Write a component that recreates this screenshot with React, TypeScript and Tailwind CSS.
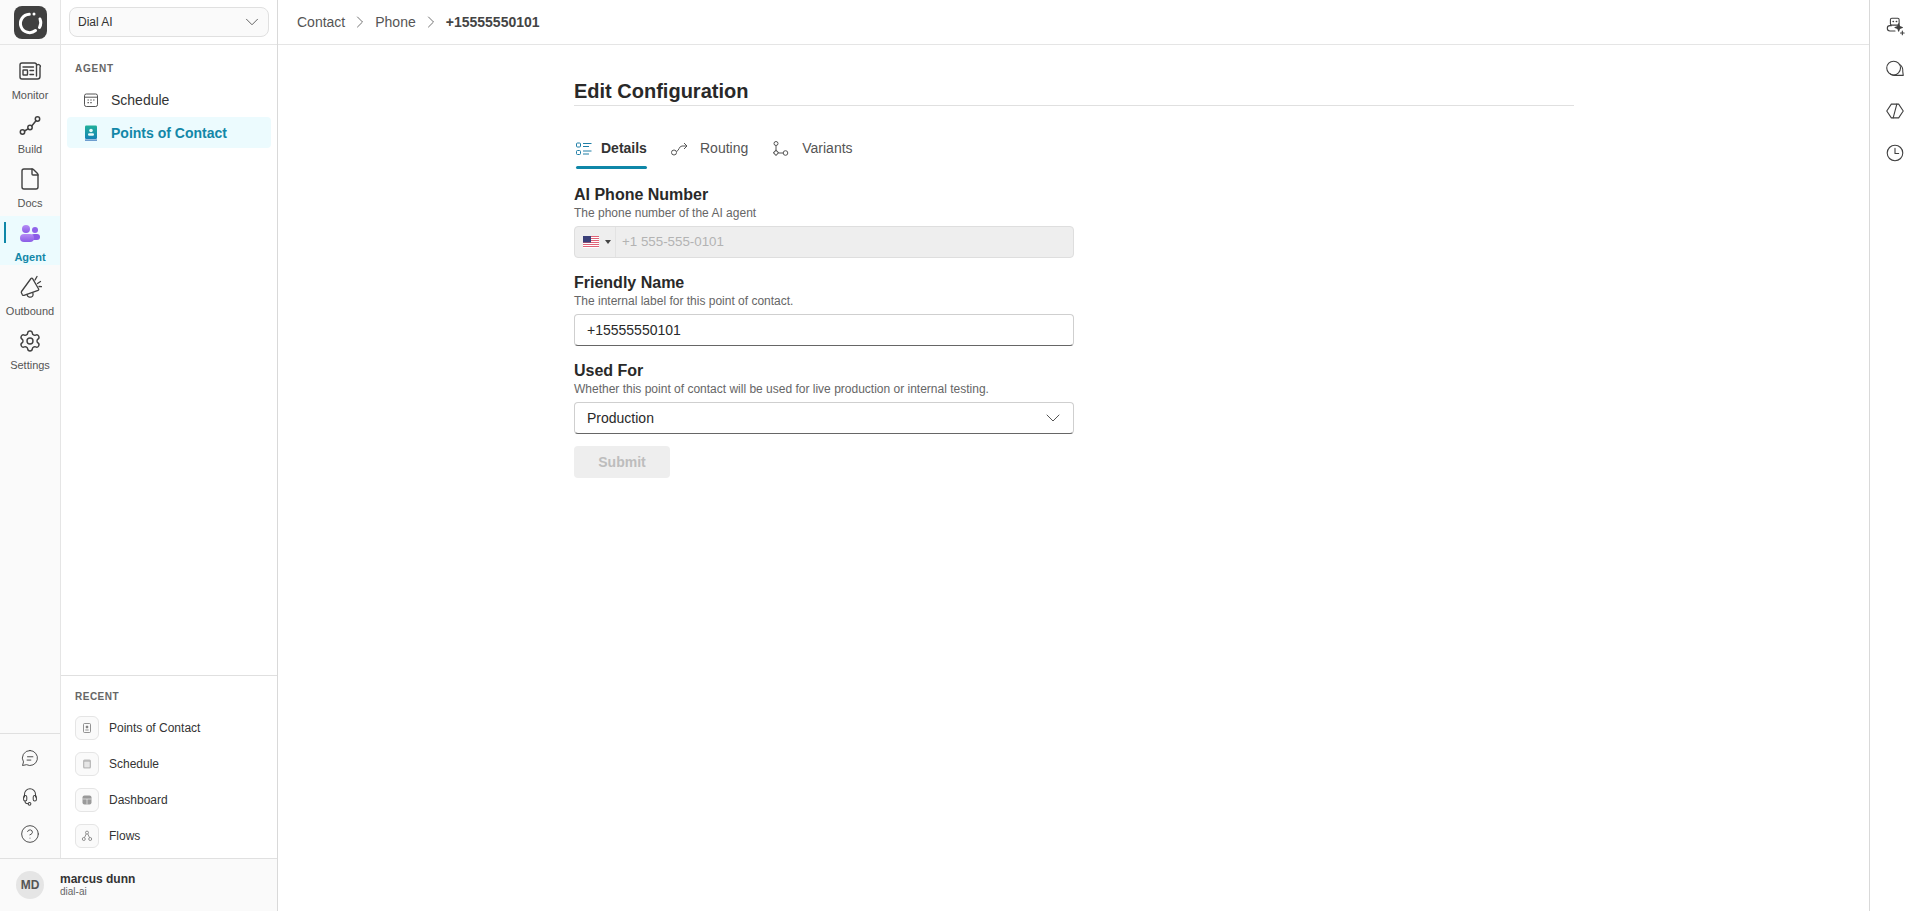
import React from "react";
import { ChevronDown, ChevronRight, File, Settings, HelpCircle } from "lucide-react";

const S = (p: React.SVGProps<SVGSVGElement> & { size?: number }) => {
  const { size = 24, children, ...r } = p;
  return (
    <svg width={size} height={size} viewBox="0 0 24 24" fill="none" stroke="#404040" strokeWidth={1.5} strokeLinecap="round" strokeLinejoin="round" {...r}>
      {children}
    </svg>
  );
};

const MonitorIcon = () => (
  <S strokeWidth={1.4}>
    <path d="M18.5 6.5V6a2 2 0 0 0-2-2H4a2 2 0 0 0-2 2v12a2 2 0 0 0 2 2h15.5a2.5 2.5 0 0 0 2.5-2.5V8.5a2 2 0 0 0-3.5-2zM18.5 6.5V17" />
    <rect x="5" y="11" width="4.5" height="5" rx="0.5" />
    <path d="M5 8h10.5M12 11.5h3.5M12 15.5h3.5" />
  </S>
);

const BuildIcon = () => (
  <S>
    <circle cx="4.5" cy="19" r="2.2" />
    <circle cx="12" cy="14.5" r="2.2" />
    <circle cx="19.5" cy="6" r="2.2" />
    <path d="M6.5 18 10 15.8M13.7 13 18 7.7" />
  </S>
);

const AgentIcon = () => (
  <svg width="24" height="24" viewBox="0 0 24 24">
    <defs>
      <linearGradient id="ag" x1="0" y1="0" x2="0" y2="1">
        <stop offset="0" stopColor="#b58cf5" />
        <stop offset="1" stopColor="#8a5ce6" />
      </linearGradient>
    </defs>
    <circle cx="8" cy="8" r="4" fill="url(#ag)" />
    <circle cx="17" cy="9" r="3" fill="#8f63ea" />
    <rect x="13" y="13" width="9" height="6" rx="3" fill="#8a5ce6" />
    <rect x="2" y="13" width="14" height="8" rx="4" fill="url(#ag)" />
  </svg>
);

const OutboundIcon = () => (
  <S strokeWidth={1.3}>
    <path d="M3.5 16.5 13 3.5c.5-.6 1.2-.5 1.6.1l6 10.4c.3.6.1 1.2-.5 1.4L6 20.3c-.6.2-1.2 0-1.6-.5l-.9-1.8c-.3-.5-.3-1 0-1.5z" />
    <path d="M9 19.5c.2 2.6 3.8 3.6 5.6 1.6.6-.7.6-2 .2-3.5" />
    <path d="M17 5l2-3.5M19.5 8.5l3-2M21 11.5l2.5.2" />
  </S>
);

const RailItem = ({ label, icon, active }: { label: string; icon: React.ReactNode; active?: boolean }) => (
  <div className={`relative flex h-[49px] flex-col items-center pt-[5px] ${active ? "bg-[#ecfbfe]" : ""}`}>
    {active && <div className="absolute left-1 top-[6px] h-[21px] w-0.5 bg-[#0e87a8]" />}
    <div className="flex h-6 w-6 items-center justify-center">{icon}</div>
    <div className={`mt-1 text-[11px] leading-4 ${active ? "font-bold text-[#1387a8]" : "text-[#555]"}`}>{label}</div>
  </div>
);

const BottomRailIcon = ({ children }: { children: React.ReactNode }) => (
  <div className="flex h-[38px] items-center justify-center">{children}</div>
);

const RecentRow = ({ label, icon }: { label: string; icon: React.ReactNode }) => (
  <div className="flex h-9 items-center gap-[10px]">
    <div className="flex h-6 w-6 items-center justify-center rounded-md border border-[#e5e5e5] bg-[#fafafa]">{icon}</div>
    <span className="text-xs text-[#333]">{label}</span>
  </div>
);

const Field = ({ title, desc, children }: { title: string; desc: string; children: React.ReactNode }) => (
  <div className="mb-[15px] w-[500px]">
    <div className="text-base font-bold leading-5 text-[#292929]">{title}</div>
    <div className="mb-[5px] text-xs leading-4 text-[#666]">{desc}</div>
    {children}
  </div>
);

const UsFlag = () => (
  <svg width="16" height="12" viewBox="0 0 16 12">
    <rect width="16" height="12" fill="#fff" />
    {[0, 2, 4, 6, 8, 10].map((y) => (
      <rect key={y} y={y} width="16" height="1" fill="#d9485f" opacity="0.85" />
    ))}
    <rect width="8" height="6.5" fill="#3a3f78" />
  </svg>
);

export default function App() {
  return (
    <div className="flex h-[911px] w-full overflow-hidden bg-white font-['Liberation_Sans',Arial,sans-serif] text-[#333]">
      <div className="flex w-[278px] shrink-0 flex-col border-r border-[#d9d9d9]">
        <div className="flex min-h-0 flex-1">
          {/* icon rail */}
          <div className="flex w-[61px] shrink-0 flex-col border-r border-[#e5e5e5] bg-[#fafafa]">
            <div className="flex h-[45px] shrink-0 items-center justify-center border-b border-[#e5e5e5]">
              <div className="flex h-[33px] w-[33px] items-center justify-center rounded-lg bg-[#404040]">
                <svg width="33" height="33" viewBox="0 0 33 33" fill="none" stroke="#fff" strokeWidth="3" strokeLinecap="round">
                  <path d="M15.3 8.2A9.2 9.2 0 1 0 21.5 24.5" />
                  <path d="M26 13a9.5 9.5 0 0 1-.5 8.5" />
                  <circle cx="20" cy="8" r="1.5" fill="#fff" stroke="none" />
                </svg>
              </div>
            </div>
            <div className="flex flex-col gap-[5px] pt-[9px]">
              <RailItem label="Monitor" icon={<MonitorIcon />} />
              <RailItem label="Build" icon={<BuildIcon />} />
              <RailItem label="Docs" icon={<File size={24} strokeWidth={1.4} color="#404040" />} />
              <RailItem label="Agent" active icon={<AgentIcon />} />
              <RailItem label="Outbound" icon={<OutboundIcon />} />
              <RailItem label="Settings" icon={<Settings size={24} strokeWidth={1.4} color="#404040" />} />
            </div>
            <div className="mt-auto flex flex-col border-t border-[#e0e0e0] pb-[5px] pt-[5px]">
              <BottomRailIcon>
                <S size={20} strokeWidth={1.1}>
                  <path d="M12 3a9 9 0 1 1-4.2 17L3 21l1.2-4.3A9 9 0 0 1 12 3z" />
                  <path d="M9 10.5h6.5M8.5 14.5H13" />
                </S>
              </BottomRailIcon>
              <BottomRailIcon>
                <S size={22} strokeWidth={1.1}>
                  <path d="M6 13V10a6 6 0 0 1 12 0v3" />
                  <rect x="5" y="11.5" width="3.5" height="6" rx="1.7" />
                  <rect x="15.5" y="11.5" width="3.5" height="6" rx="1.7" />
                  <path d="M6.5 17.5c0 2 1.5 3 3.5 3" />
                  <circle cx="11.5" cy="20.5" r="1.5" />
                </S>
              </BottomRailIcon>
              <BottomRailIcon>
                <HelpCircle size={20} strokeWidth={1.1} color="#404040" />
              </BottomRailIcon>
            </div>
          </div>

          {/* sidebar */}
          <div className="flex min-w-0 flex-1 flex-col">
            <div className="flex h-[45px] shrink-0 items-center border-b border-[#e5e5e5] px-2">
              <div className="flex h-[30px] w-[200px] items-center justify-between rounded-lg border border-[#e0e0e0] bg-[#fafafa] pl-2 pr-[5px]">
                <span className="text-xs text-[#333]">Dial AI</span>
                <ChevronDown size={22} strokeWidth={1} color="#555" />
              </div>
            </div>
            <div className="flex-1 px-[6px]">
              <div className="flex h-[38px] items-center px-2 pt-2 text-[10px] font-bold tracking-[0.8px] text-[#666]">AGENT</div>
              <div className="flex h-[34px] items-center gap-3 pl-4">
                <svg width="16" height="16" viewBox="0 0 16 16" fill="none" stroke="#555" strokeWidth="1">
                  <rect x="1.5" y="2" width="13" height="12.5" rx="1.8" />
                  <path d="M1.5 5.2h13" />
                  <path d="M4.5 8h1.4M7.3 8h1.4M10.1 8h1.4M4.5 10.6h1.4M7.3 10.6h1.4" strokeWidth="1.2" />
                </svg>
                <span className="text-sm text-[#333]">Schedule</span>
              </div>
              <div className="flex h-[31px] items-center gap-3 rounded-sm bg-[#ecfbfe] pl-4">
                <svg width="16" height="16" viewBox="0 0 16 16">
                  <defs>
                    <linearGradient id="pc" x1="0" y1="0" x2="0" y2="1">
                      <stop offset="0" stopColor="#22b09a" />
                      <stop offset="1" stopColor="#1582b5" />
                    </linearGradient>
                  </defs>
                  <rect x="2" y="0.5" width="12" height="13.5" rx="1.2" fill="url(#pc)" />
                  <rect x="2" y="14.6" width="12" height="1" fill="#1a5fb0" />
                  <circle cx="8" cy="5.5" r="1.8" fill="#e8fbf9" />
                  <rect x="5" y="8.3" width="6" height="2.4" rx="1.2" fill="#e8fbf9" />
                </svg>
                <span className="text-sm font-bold text-[#1387a8]">Points of Contact</span>
              </div>
            </div>
            <div className="border-t border-[#e0e0e0] px-[14px] pb-1">
              <div className="flex h-[34px] items-center pt-[6px] text-[10px] font-bold tracking-[0.5px] text-[#666]">RECENT</div>
              <RecentRow
                label="Points of Contact"
                icon={
                  <svg width="12" height="12" viewBox="0 0 12 12" fill="none" stroke="#777" strokeWidth="0.8">
                    <rect x="2.5" y="1.5" width="7" height="9" rx="1" />
                    <circle cx="6" cy="5" r="1" fill="#777" />
                    <path d="M4.3 8h3.4" />
                  </svg>
                }
              />
              <RecentRow
                label="Schedule"
                icon={
                  <svg width="12" height="12" viewBox="0 0 12 12">
                    <rect x="2" y="1.5" width="8" height="9" rx="1.5" fill="#bbb" />
                    <rect x="3.3" y="3.8" width="5.4" height="5.4" rx="0.6" fill="#e6e6e6" />
                  </svg>
                }
              />
              <RecentRow
                label="Dashboard"
                icon={
                  <svg width="12" height="12" viewBox="0 0 12 12">
                    <rect x="1.5" y="1.5" width="9" height="9" rx="2" fill="#9a9a9a" />
                    <path d="M1.5 5h9M6 5v5.5" stroke="#eee" strokeWidth="0.7" />
                  </svg>
                }
              />
              <RecentRow
                label="Flows"
                icon={
                  <svg width="12" height="12" viewBox="0 0 12 12" fill="none" stroke="#777" strokeWidth="0.8">
                    <circle cx="6" cy="2.6" r="1.5" />
                    <circle cx="2.8" cy="9" r="1.5" />
                    <circle cx="9.2" cy="9" r="1.5" />
                    <path d="M5.2 4 3.5 7.6M6.8 4l1.7 3.6" />
                  </svg>
                }
              />
            </div>
          </div>
        </div>
        {/* user */}
        <div className="flex h-[53px] shrink-0 items-center border-t border-[#e0e0e0] bg-[#fafafa] pl-4">
          <div className="flex h-7 w-7 items-center justify-center rounded-full bg-[#e5e5e5] text-xs font-bold text-[#555]">MD</div>
          <div className="ml-4 flex flex-col">
            <span className="text-xs font-bold leading-[14px] text-[#333]">marcus dunn</span>
            <span className="text-[10px] leading-3 text-[#666]">dial-ai</span>
          </div>
        </div>
      </div>

      {/* main */}
      <div className="flex min-w-0 flex-1 flex-col">
        <div className="flex h-[45px] shrink-0 items-center gap-[5px] border-b border-[#e5e5e5] pl-[19px] text-sm">
          <span className="text-[#555]">Contact</span>
          <ChevronRight size={20} strokeWidth={1} color="#555" />
          <span className="text-[#555]">Phone</span>
          <ChevronRight size={20} strokeWidth={1} color="#555" />
          <span className="font-bold text-[#444]">+15555550101</span>
        </div>
        <div className="flex-1 pl-[296px] pt-[30px]">
          <div className="w-[1000px]">
            <div className="h-[31px] border-b border-[#e0e0e0] text-xl font-bold leading-[32px] text-[#292929]">Edit Configuration</div>
            <div className="mt-5 flex h-[43px] items-start gap-[24px] pl-[2px]">
              <div className="relative flex h-[43px] w-[71px] items-start gap-[9px] pt-[13px]">
                <svg width="16" height="16" viewBox="0 0 16 16" fill="none" stroke="#1e7ea6" strokeWidth="1" className="mt-[2px]">
                  <rect x="0.5" y="2" width="4" height="4" rx="1" />
                  <rect x="0.5" y="9.5" width="4" height="4" rx="1" />
                  <path d="M7 2.5h8.5M7 5.5h6M7 10h8.5M7 13h6" />
                </svg>
                <span className="text-sm font-bold leading-[18px] text-[#333]">Details</span>
                <div className="absolute inset-x-0 bottom-0 h-[3px] rounded-sm bg-[#0e87a8]" />
              </div>
              <div className="flex items-start gap-[12px] pt-[13px]">
                <svg width="17" height="16" viewBox="0 0 17 16" fill="none" stroke="#555" strokeWidth="1" className="mt-[2px]">
                  <circle cx="3" cy="11.5" r="2.5" />
                  <path d="M5.5 10.5C8 10 8 5 11 5h4.5M13 2l3 3-3 3" />
                </svg>
                <span className="text-sm leading-[18px] text-[#555]">Routing</span>
              </div>
              <div className="flex items-start gap-[13px] pl-[1px] pt-[13px]">
                <svg width="16" height="16" viewBox="0 0 16 16" fill="none" stroke="#555" strokeWidth="1" className="mt-[2px]">
                  <circle cx="3" cy="2.5" r="2" />
                  <rect x="1.2" y="10" width="3.6" height="3.6" transform="rotate(45 3 11.8)" />
                  <circle cx="12.5" cy="12" r="2.3" />
                  <path d="M3 4.5v5M5.6 12h4.6" />
                </svg>
                <span className="text-sm leading-[18px] text-[#555]">Variants</span>
              </div>
            </div>
            <div className="mt-4">
              <Field title="AI Phone Number" desc="The phone number of the AI agent">
                <div className="flex h-8 items-center rounded border border-[#dedede] bg-[#eeeeee]">
                  <div className="flex h-full w-[41px] shrink-0 items-center gap-[6px] border-r border-[#e3e3e3] pl-2">
                    <UsFlag />
                    <div className="h-0 w-0 border-x-[3px] border-t-4 border-x-transparent border-t-[#444]" />
                  </div>
                  <span className="pl-[6px] text-[13.33px] text-[#b3b3b3]">+1 555-555-0101</span>
                </div>
              </Field>
              <Field title="Friendly Name" desc="The internal label for this point of contact.">
                <div className="flex h-8 items-center rounded border border-[#cfcfcf] border-b-[#666] bg-white pl-3 text-sm text-[#292929]">+15555550101</div>
              </Field>
              <Field title="Used For" desc="Whether this point of contact will be used for live production or internal testing.">
                <div className="flex h-8 items-center justify-between rounded border border-[#cfcfcf] border-b-[#666] bg-white pl-3 pr-2 text-sm text-[#292929]">
                  Production
                  <ChevronDown size={24} strokeWidth={1} color="#555" />
                </div>
              </Field>
              <div className="-mt-[3px] flex h-8 w-[96px] items-center justify-center rounded bg-[#eeeeee] text-sm font-bold text-[#bdbdbd]">Submit</div>
            </div>
          </div>
        </div>
      </div>

      {/* right rail */}
      <div className="flex w-[51px] shrink-0 flex-col items-center gap-5 border-l border-[#d9d9d9] pt-4">
        <S size={22} strokeWidth={1.2}>
          <rect x="7" y="2.5" width="9.5" height="7.5" rx="1.5" />
          <path d="M10 6h.2M13.5 6h.2" strokeWidth="1.8" />
          <path d="M8 10.5H6.5a2.7 2.7 0 0 0 0 5.8H12" />
          <path d="M16 8.5l1 3 3 1-3 1-1 3-1-3-3-1 3-1zM20 16.5v4M18 18.5h4" fill="#404040" />
        </S>
        <S size={22} strokeWidth={1.2}>
          <circle cx="10.5" cy="11" r="7.5" />
          <path d="M17 7c3 2 3.8 5 3.5 8l.5 4H11c-2-.2-3-.8-4-1.8" />
        </S>
        <S size={22} strokeWidth={1.2}>
          <path d="M8 4.5h8l5 7.5-5 7.5H8L3 12z" />
          <path d="M14 4.5 10 19.5" />
        </S>
        <S size={22} strokeWidth={1.2}>
          <circle cx="12" cy="12" r="8.5" />
          <path d="M12 7v5.5h4" />
        </S>
      </div>
    </div>
  );
}
